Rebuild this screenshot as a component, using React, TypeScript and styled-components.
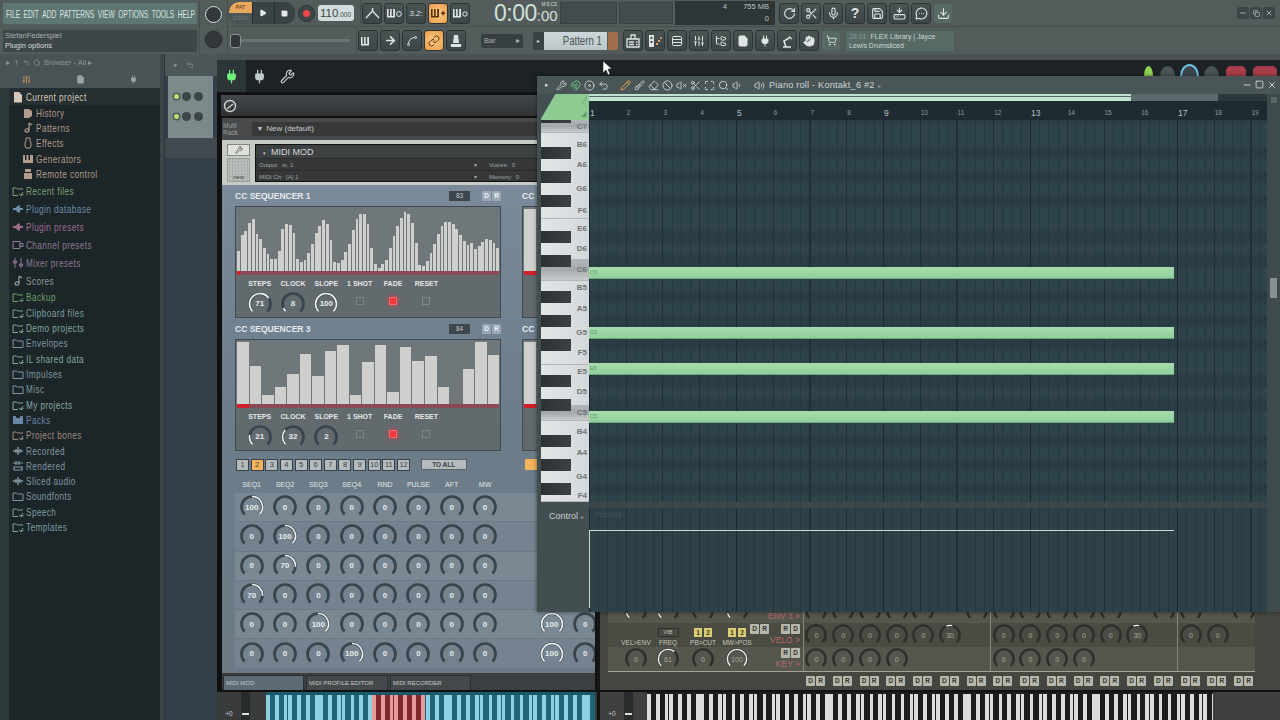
import React from 'react';
import styled, { createGlobalStyle } from 'styled-components';
import {
  Play, Square, Wrench, Magnet, Undo2, Pencil, Brush, Ban, VolumeX, Maximize, Search, Volume2, Volume1,
  Link, ArrowRight, Save, MessageCircleMore, Download, Mic, RotateCw, Plug, ShoppingCart, File, Minus, X,
  Copy, SlidersVertical, Rows3, FolderTree, Hand, ArrowUp, Spline, Scissors, HardDriveDownload, Eraser, Disc,
} from 'lucide-react';

const SANS = '"Liberation Sans", Arial, sans-serif';

const GlobalStyle = createGlobalStyle`
  html, body { margin: 0; padding: 0; background: #2b3336; overflow: hidden; }
  * { box-sizing: border-box; }
  #root { width: 1280px; height: 720px; }
`;

const octave = (semi: number, light: string, dark: string) => {
  const pattern = [0, 1, 0, 1, 0, 0, 1, 0, 1, 0, 1, 0];
  const stops = pattern
    .map((k, i) => {
      const c = k ? dark : light;
      return `${c} ${i * semi}px, ${c} ${(i + 1) * semi - (k ? 0 : 0.8)}px, ${dark} ${(i + 1) * semi - (k ? 0 : 0.8)}px, ${dark} ${(i + 1) * semi}px`;
    })
    .join(', ');
  return `repeating-linear-gradient(90deg, ${stops})`;
};

const rowShade = () => {
  // one octave of note rows read from the top: C7 ... C#6
  const dark = [0, 0, 1, 0, 1, 0, 1, 0, 0, 1, 0, 1];
  return dark
    .map((d, i) => {
      const c = d ? '#2b3d44' : '#2f434a';
      return `${c} ${i * 12}px, ${c} ${(i + 1) * 12}px`;
    })
    .join(', ');
};

const Page = styled.div`
  width: 1280px;
  height: 720px;
  display: flex;
  flex-direction: column;
  overflow: hidden;
  font-family: ${SANS};
  background: #2b3336;
  position: relative;
`;

/* ---------- top toolbar ---------- */
const TopBar = styled.div`
  height: 54px;
  display: flex;
  background: #535c5b;
  flex: none;
`;
const MenuColumn = styled.div`
  width: 200px;
  padding: 3px 2px 0 3px;
  display: flex;
  flex-direction: column;
  gap: 6px;
  border-right: 1px solid #454d4d;
`;
const MenuBar = styled.div`
  height: 21px;
  background: #5f7772;
  padding-left: 3px;
  overflow: hidden;
`;
const MenuInner = styled.div`
  width: 326px;
  height: 21px;
  display: flex;
  align-items: center;
  justify-content: space-between;
  font-size: 11.5px;
  color: #d9e4e0;
  transform: scaleX(0.58);
  transform-origin: left center;
`;
const HintPanel = styled.div`
  height: 22px;
  background: #3e4648;
  padding: 1px 2px;
  font-size: 7.5px;
  line-height: 10px;
  color: #a7afaf;
  b { display: block; font-weight: 400; color: #d4dadb; }
`;
const KnobColumn = styled.div`
  width: 28px;
  display: flex;
  flex-direction: column;
  align-items: center;
  justify-content: space-around;
  padding: 2px 0;
  border-right: 1px solid #454d4d;
`;
const RoundKnob = styled.div<{ $ring?: boolean }>`
  width: 17px;
  height: 17px;
  border-radius: 50%;
  background: #33393a;
  border: ${({ $ring }) => ($ring ? '1.5px solid #dfe6e6' : '1px solid #23282a')};
  box-shadow: 0 0 0 1px #4a5252;
`;
const Rows = styled.div`
  flex: 1;
  display: flex;
  flex-direction: column;
`;
const ToolRow = styled.div<{ $line?: boolean }>`
  height: 27px;
  display: flex;
  align-items: center;
  border-bottom: ${({ $line }) => ($line ? '1px solid #474f4f' : 'none')};
`;
const TransportPill = styled.div`
  margin-left: 1px;
  width: 66px;
  height: 22px;
  background: #2f3536;
  border-radius: 10px;
  display: flex;
  overflow: hidden;
  flex: none;
`;
const PatSong = styled.div`
  width: 23px;
  display: flex;
  flex-direction: column;
  font-size: 5.5px;
  text-align: center;
  line-height: 10px;
  span:first-child { background: #eaa85c; color: #4b3115; height: 11px; border-radius: 6px 0 0 0; }
  span:last-child { background: #4d5556; color: #6f7878; height: 11px; }
`;
const PillButton = styled.div`
  flex: 1;
  display: flex;
  align-items: center;
  justify-content: center;
  background: #3b4243;
  border-left: 1px solid #272c2d;
  color: #e5eaea;
`;
const RecordButton = styled.div`
  width: 17px;
  height: 17px;
  margin-left: 3px;
  border-radius: 50%;
  background: #3f4647;
  border: 1px solid #2c3132;
  display: flex;
  align-items: center;
  justify-content: center;
  flex: none;
  &::after { content: ''; width: 7px; height: 7px; border-radius: 50%; background: #e8474c; }
`;
const Tempo = styled.div`
  width: 36px;
  height: 16px;
  margin-left: 3px;
  margin-right: 5px;
  background: #d3dcdc;
  border-radius: 3px;
  font-size: 11.5px;
  line-height: 16px;
  color: #3d4647;
  padding-left: 2px;
  white-space: nowrap;
  flex: none;
  small { font-size: 6.5px; }
`;
const Divider = styled.div<{ $w?: number }>`
  width: 1px;
  align-self: stretch;
  background: #464e4e;
  margin: 0 ${({ $w }) => $w ?? 2}px;
  flex: none;
`;
const ToolButton = styled.div<{ $on?: boolean; $flat?: boolean; $big?: boolean }>`
  width: 20px;
  height: 21px;
  flex: none;
  border-radius: 3px;
  display: flex;
  align-items: center;
  justify-content: center;
  font-size: ${({ $big }) => ($big ? 14 : 8)}px;
  font-weight: ${({ $big }) => ($big ? 700 : 400)};
  font-style: ${({ $big }) => ($big ? 'normal' : 'italic')};
  color: ${({ $on }) => ($on ? '#5b3208' : '#dfe5e5')};
  background: ${({ $on, $flat }) =>
    $on
      ? 'radial-gradient(circle, #fbc47f 20%, #e99a45 100%)'
      : $flat
      ? '#586a66'
      : 'linear-gradient(#4a5252, #3e4546)'};
  border: 1px solid ${({ $flat }) => ($flat ? '#4d5c59' : '#2e3435')};
`;
const ToolGroup = styled.div`
  display: flex;
  gap: 2px;
  flex: none;
`;
const TimeBox = styled.div`
  width: 64px;
  margin-left: 24px;
  margin-right: 2px;
  height: 26px;
  flex: none;
  display: flex;
  align-items: baseline;
  color: #cfe0db;
  font-size: 23px;
  line-height: 26px;
  position: relative;
  letter-spacing: -0.5px;
  white-space: nowrap;
  span { font-size: 15px; letter-spacing: 0; }
  small { position: absolute; right: 1px; top: 2px; font-size: 4.5px; letter-spacing: 0; line-height: 6px; }
`;
const DarkPanel = styled.div<{ $w: number }>`
  width: ${({ $w }) => $w}px;
  height: 22px;
  background: #434b4c;
  border: 1px solid #3a4142;
  margin-right: 2px;
  flex: none;
`;
const CpuPanel = styled.div`
  width: 100px;
  height: 24px;
  margin-right: 4px;
  flex: none;
  background: #2e3537;
  display: grid;
  grid-template-columns: 1fr 42px;
  grid-template-rows: 1fr 1fr;
  font-size: 7.5px;
  color: #b9c2c2;
  line-height: 12px;
  text-align: right;
  padding-right: 3px;
  span { padding-right: 3px; }
`;
const WindowButtons = styled.div`
  margin-left: auto;
  margin-right: 5px;
  display: flex;
  gap: 1px;
`;
const WindowButton = styled.div`
  width: 12px;
  height: 12px;
  background: #3e4647;
  border-radius: 2px;
  color: #d5dbdb;
  display: flex;
  align-items: center;
  justify-content: center;
`;
const MainSlider = styled.div`
  width: 120px;
  margin: 0 5px 0 2px;
  height: 3px;
  background: #6b7474;
  position: relative;
  flex: none;
  &::before {
    content: '';
    position: absolute;
    left: 0;
    top: -5px;
    width: 9px;
    height: 12px;
    border-radius: 3px;
    background: #30363a;
    border: 1px solid #8a9292;
  }
`;
const BarSelect = styled.div`
  width: 42px;
  height: 14px;
  margin-left: 15px;
  flex: none;
  background: #383f41;
  border-radius: 2px;
  font-size: 7.5px;
  line-height: 14px;
  color: #aab3b3;
  display: flex;
  justify-content: space-between;
  padding: 0 3px;
`;
const SmallArrow = styled.div`
  width: 11px;
  height: 18px;
  margin-left: 10px;
  flex: none;
  background: #3a4244;
  border-radius: 2px 0 0 2px;
  color: #cfd6d6;
  font-size: 6px;
  line-height: 18px;
  text-align: center;
`;
const PatternName = styled.div`
  width: 63px;
  height: 18px;
  flex: none;
  background: linear-gradient(#cdd6d8, #bcc7ca);
  color: #4b5557;
  font-size: 13px;
  line-height: 18px;
  text-align: right;
  padding-right: 5px;
  span { display: inline-block; transform: scaleX(0.74); transform-origin: right center; white-space: nowrap; }
`;
const PatternSwatch = styled.div`
  width: 10px;
  height: 18px;
  flex: none;
  margin-left: 1px;
  margin-right: 5px;
  background: #a16f4c;
  border-radius: 0 2px 2px 0;
`;
const NewsPanel = styled.div`
  width: 110px;
  height: 22px;
  margin-left: 4px;
  flex: none;
  background: #586a66;
  border: 1px solid #4d5c59;
  border-radius: 2px;
  padding: 1px 3px;
  font-size: 7px;
  line-height: 9.5px;
  color: #cbd6d3;
  white-space: nowrap;
  em { font-style: normal; color: #8b9c98; margin-right: 4px; }
`;

/* ---------- browser ---------- */
const Body = styled.div`
  flex: 1;
  display: flex;
  min-height: 0;
`;
const Browser = styled.aside`
  width: 160px;
  flex: none;
  display: flex;
  flex-direction: column;
  background: #1c2528;
`;
const BrowserHead = styled.div`
  height: 34px;
  background: #495254;
  flex: none;
  display: flex;
  flex-direction: column;
`;
const BrowserPath = styled.div`
  height: 17px;
  display: flex;
  align-items: center;
  gap: 3px;
  padding-left: 6px;
  color: #8d9796;
  font-size: 7.5px;
`;
const BrowserTabs = styled.div`
  flex: 1;
  display: flex;
  justify-content: space-between;
  align-items: center;
  padding: 0 22px;
  color: #9aa3a2;
`;
const BrowserList = styled.div`
  flex: 1;
  display: flex;
  flex-direction: column;
  margin-left: 9px;
  background: #1c2528;
  box-shadow: -9px 0 0 #2e393c;
`;
const BrowserRow = styled.div<{ $h: number; $color: string; $sub?: boolean; $head?: boolean }>`
  height: ${({ $h }) => $h}px;
  display: flex;
  align-items: center;
  flex: none;
  gap: 2px;
  padding-left: ${({ $sub }) => ($sub ? 13 : 3)}px;
  font-size: 10.5px;
  letter-spacing: 0.55px;
  color: ${({ $color }) => $color};
  background: ${({ $head }) => ($head ? '#252f32' : 'transparent')};
  svg { flex: none; }
  span { white-space: nowrap; transform: scaleX(0.78); transform-origin: left center; }
`;
const Splitter = styled.div`
  width: 5px;
  flex: none;
  background: #3d4749;
  border-right: 1px solid #2c3437;
`;
const RackColumn = styled.div`
  width: 52px;
  flex: none;
  display: flex;
  flex-direction: column;
  background: #343f47;
`;
const RackHead = styled.div`
  height: 22px;
  background: #4d5759;
  display: flex;
  gap: 8px;
  align-items: center;
  padding-left: 9px;
  color: #8e9897;
  font-size: 7px;
`;
const MiniRack = styled.div`
  height: 62px;
  margin: 0 4px 0 3px;
  background: #7d8a8c;
  display: flex;
  flex-direction: column;
  padding: 16px 0 0 6px;
  gap: 11px;
`;
const MiniRow = styled.div`
  display: flex;
  align-items: center;
  gap: 3px;
`;
const Led = styled.div`
  width: 5px;
  height: 5px;
  border-radius: 50%;
  background: #b9e06f;
  box-shadow: 0 0 0 1.5px #4e5a55;
`;
const MiniKnob = styled.div`
  width: 9px;
  height: 9px;
  border-radius: 50%;
  background: #3c4649;
`;
const RackFoot = styled.div`
  height: 20px;
  background: #40494d;
`;

/* ---------- desktop ---------- */
const Desktop = styled.main`
  flex: 1;
  min-width: 0;
  position: relative;
  display: flex;
  flex-direction: column;
`;
const DeskStrip = styled.div`
  height: 6px;
  flex: none;
  background: #4a5254;
`;
const TabBar = styled.div`
  height: 32px;
  flex: none;
  display: flex;
  background: #1c2226;
`;
const TabIcons = styled.div`
  display: flex;
  align-items: center;
  gap: 13px;
  padding-left: 6px;
  color: #c3caca;
`;
const ActiveTab = styled.div`
  width: 29px;
  height: 32px;
  background: #2e3538;
  color: #6ff07a;
  display: flex;
  align-items: center;
  justify-content: center;
`;
const TabRight = styled.div`
  margin-left: auto;
  display: flex;
  gap: 7px;
  padding: 6px 3px 0 0;
`;
const TabKnob = styled.div<{ $color: string; $ring?: string; $w?: number; $r?: string }>`
  width: ${({ $w }) => $w ?? 15}px;
  height: 20px;
  border-radius: ${({ $r }) => $r ?? '50%'};
  background: ${({ $color }) => $color};
  box-shadow: ${({ $ring }) => ($ring ? `0 0 0 2px ${$ring}` : 'none')};
`;
const WorkRow = styled.div`
  flex: 1;
  display: flex;
  min-height: 0;
`;
const PluginWindow = styled.section`
  width: 380px;
  flex: none;
  display: flex;
  flex-direction: column;
  background: #111;
  padding: 3px 2px 0 5px;
  overflow: hidden;
`;
const PluginHeader = styled.div`
  height: 21px;
  flex: none;
  margin-left: -1px;
  background: linear-gradient(#45484a, #2f3133);
  display: flex;
  align-items: center;
  padding-left: 2px;
  color: #cfd3d3;
`;
const MultiRack = styled.div`
  height: 22px;
  margin-top: 2px;
  flex: none;
  background: #484a4c;
  display: flex;
  align-items: center;
  font-size: 6.5px;
  line-height: 7.5px;
  color: #97a0a0;
  padding-left: 1px;
`;
const MultiName = styled.div`
  margin-left: 14px;
  flex: 1;
  height: 14px;
  background: #36383a;
  font-size: 8px;
  line-height: 14px;
  color: #c8cccc;
  white-space: nowrap;
  padding-left: 6px;
`;
const RackStrip = styled.div`
  height: 45px;
  flex: none;
  background: #c7cbc5;
  display: flex;
  align-items: center;
  padding-left: 5px;
  gap: 5px;
`;
const RackButtons = styled.div`
  width: 23px;
  display: flex;
  flex-direction: column;
  gap: 2px;
`;
const WrenchButton = styled.div`
  height: 12px;
  background: #dfe2dc;
  border: 1px solid #82867f;
  color: #444;
  display: flex;
  align-items: center;
  justify-content: center;
`;
const NewButton = styled.div`
  height: 24px;
  background: repeating-conic-gradient(#a9adaa 0 25%, #c2c5c1 0 50%) 0 0 / 3px 3px;
  border: 1px solid #9a9e98;
  font-size: 6px;
  padding-top: 14px;
  line-height: 8px;
  text-align: center;
  color: #444;
`;
const MidiBox = styled.div`
  flex: 1;
  height: 38px;
  background: #353738;
  border: 1px solid #111;
  color: #b7bcbc;
  font-size: 6px;
  white-space: nowrap;
  overflow: hidden;
`;
const MidiName = styled.div`
  height: 13px;
  font-size: 9px;
  line-height: 14px;
  color: #d3d6d6;
  padding-left: 7px;
  background: #3e4142;
  small { font-size: 5px; margin-right: 5px; }
`;
const MidiRow = styled.div`
  height: 12px;
  line-height: 12px;
  display: flex;
  padding-left: 3px;
  border-top: 1px solid #2a2c2d;
  color: #a3a9a9;
`;
const MidiField = styled.span`
  width: 225px;
  display: flex;
  justify-content: space-between;
  padding-right: 7px;
  margin-right: 5px;
`;
const RackPanel = styled.div`
  flex: 1;
  min-height: 0;
  background: linear-gradient(#7a8a99, #6d7e8c 40%, #6b7a84);
  padding: 3px 0 0 13px;
  display: flex;
  flex-direction: column;
  overflow: hidden;
`;
const SeqGrid = styled.div`
  display: grid;
  grid-template-columns: 266px 266px;
  column-gap: 21px;
  row-gap: 3px;
  flex: none;
`;
const SeqTitle = styled.div`
  height: 18px;
  padding-bottom: 2px;
  display: flex;
  align-items: center;
  font-weight: 700;
  font-size: 8.5px;
  color: #e6eaee;
  white-space: nowrap;
`;
const SeqBadge = styled.div`
  margin-left: auto;
  width: 21px;
  height: 10px;
  background: #3e464d;
  font-weight: 400;
  font-size: 6.5px;
  line-height: 10px;
  color: #c0c6ca;
  text-align: center;
  margin-right: 11px;
`;
const TinyKey = styled.div<{ $dark?: boolean }>`
  width: 9px;
  height: 10px;
  margin-left: 1px;
  background: ${({ $dark }) => ($dark ? '#b7b8ad' : '#99a7b5')};
  color: ${({ $dark }) => ($dark ? '#33342d' : '#eef2f5')};
  border-radius: 1px;
  font-weight: 700;
  font-size: 6.5px;
  line-height: 10px;
  text-align: center;
  flex: none;
`;
const SeqPanel = styled.div`
  height: 112px;
  border: 1px solid #3f4a52;
  background: #636a6e;
  display: flex;
  flex-direction: column;
`;
const SeqBars = styled.div<{ $gap: number }>`
  height: 64px;
  flex: none;
  display: flex;
  align-items: flex-end;
  gap: ${({ $gap }) => $gap}px;
  padding: 0 1px;
  background: #6f777b;
`;
const SeqBar = styled.div`
  flex: 1;
  background: #cfd0cd;
`;
const SeqTrack = styled.div<{ $w: number }>`
  height: 4px;
  flex: none;
  margin: 0 1px;
  background: linear-gradient(90deg, #d0202c ${({ $w }) => $w}px, #8a4a55 ${({ $w }) => $w}px);
`;
const SeqControls = styled.div`
  flex: 1;
  display: grid;
  grid-template-columns: repeat(6, 33.35px);
  grid-template-rows: 14px 1fr;
  padding: 1px 0 0 7px;
  justify-items: center;
  align-items: center;
  font-size: 7px;
  font-weight: 700;
  color: #e3e6e8;
  white-space: nowrap;
`;
const Check = styled.div<{ $on?: boolean }>`
  width: 8px;
  height: 8px;
  margin-top: -5px;
  border: 1px solid ${({ $on }) => ($on ? '#f26a6f' : '#7d8589')};
  background: ${({ $on }) => ($on ? '#f0383f' : 'transparent')};
  box-shadow: ${({ $on }) => ($on ? '0 0 4px #f0383f' : 'none')};
`;
const NumberRow = styled.div`
  display: flex;
  height: 15px;
  margin-top: 6px;
  gap: 1.65px;
  flex: none;
  align-items: center;
  margin-left: 1px;
`;
const NumKey = styled.div<{ $on?: boolean }>`
  width: 13px;
  height: 12px;
  background: ${({ $on }) => ($on ? '#f4b35c' : '#b5bbbd')};
  border: 1px solid #39414a;
  font-size: 7.5px;
  line-height: 10px;
  text-align: center;
  color: #3b4349;
`;
const ToAll = styled.div`
  margin-left: 9px;
  width: 46px;
  height: 11px;
  background: #b5bbbd;
  border: 1px solid #5b646b;
  font-weight: 700;
  font-size: 6.5px;
  line-height: 9px;
  text-align: center;
  color: #3b4349;
  flex: none;
`;
const OrangeKey = styled.div`
  margin-left: 57px;
  width: 30px;
  height: 11px;
  background: #f4b35c;
  flex: none;
`;
const MatrixHead = styled.div`
  display: grid;
  grid-template-columns: repeat(8, 33.35px);
  height: 12px;
  margin-top: 6px;
  justify-items: center;
  align-items: center;
  font-size: 7px;
  color: #e3e6e8;
  flex: none;
`;
const MatrixRow = styled.div<{ $shade: boolean }>`
  display: grid;
  grid-template-columns: repeat(11, 33.35px);
  height: 29.3px;
  justify-items: center;
  align-items: center;
  flex: none;
  background: ${({ $shade }) => ($shade ? '#7a8894' : '#74838f')};
  border-bottom: 1px solid #6c7a85;
`;
const MatrixWrap = styled.div`
  margin-top: 3px;
  flex: none;
`;
const PluginTabs = styled.div`
  height: 17px;
  flex: none;
  display: flex;
  background: #3c3f41;
  align-items: flex-end;
  padding-left: 1px;
  gap: 2px;
  font-size: 6px;
  color: #c4c8c8;
`;
const PluginTab = styled.div<{ $w: number; $on?: boolean }>`
  width: ${({ $w }) => $w}px;
  height: 15px;
  background: ${({ $on }) => ($on ? '#5d6b76' : '#46494b')};
  border: 1px solid #2e3032;
  border-bottom: none;
  line-height: 15px;
  padding-left: 2px;
  white-space: nowrap;
`;

/* ---------- knob ---------- */
const KnobBox = styled.div<{ $s: number }>`
  width: ${({ $s }) => $s}px;
  height: ${({ $s }) => $s}px;
  display: grid;
  place-items: center;
  svg, span { grid-area: 1 / 1; }
  span {
    font-size: ${({ $s }) => ($s > 23 ? 8 : 7)}px;
    font-weight: 700;
    color: #e7ebee;
  }
`;
const KnobBoxDim = styled(KnobBox)`
  span { color: #a9aa9e; font-weight: 400; }
`;

const polar = (f: number) => {
  const a = ((-135 + 270 * f) * Math.PI) / 180;
  return [12 + 10.5 * Math.sin(a), 12 - 10.5 * Math.cos(a)];
};
const arcPath = (f0: number, f1: number) => {
  const [x0, y0] = polar(f0);
  const [x1, y1] = polar(f1);
  return `M${x0} ${y0}A10.5 10.5 0 ${(f1 - f0) * 270 > 180 ? 1 : 0} 1 ${x1} ${y1}`;
};

type KnobProps = { value: number | string; from?: number; to?: number; size?: number; track?: string; dim?: boolean };
const Knob = ({ value, from = 0, to = 0, size = 24, track = '#39444d', dim }: KnobProps) => {
  const Box = dim ? KnobBoxDim : KnobBox;
  return (
    <Box $s={size}>
      <svg width={size} height={size} viewBox="0 0 24 24" fill="none">
        <path d={arcPath(0, 1)} stroke={track} strokeWidth={2.7} />
        {to > from && <path d={arcPath(from, to)} stroke="#f0f2f2" strokeWidth={1.6} />}
      </svg>
      <span>{value}</span>
    </Box>
  );
};

/* ---------- sequencer ---------- */
const seqOne = [60, 108, 120, 143, 155, 110, 95, 68, 50, 35, 35, 60, 125, 140, 138, 115, 35, 28, 32, 55, 80, 115, 135, 152, 140, 93, 28, 25, 32, 58, 80, 122, 155, 172, 172, 140, 70, 20, 10, 20, 32, 70, 105, 135, 160, 177, 170, 145, 85, 18, 15, 30, 55, 80, 112, 135, 148, 148, 140, 125, 108, 90, 78, 85, 65, 75, 88, 95, 92, 85, 70];
const seqThree = [185, 115, 28, 50, 90, 150, 83, 160, 178, 28, 125, 178, 35, 172, 130, 145, 50, 0, 105, 187, 148];

type SeqProps = { title: string; badge?: string; bars: number[]; gap: number; mark: number; knobs?: [number, number, number, number, number, number] };
const Sequencer = ({ title, badge, bars, gap, mark, knobs }: SeqProps) => (
  <div>
    <SeqTitle>
      {title}
      {badge && (
        <>
          <SeqBadge>{badge}</SeqBadge>
          <TinyKey>D</TinyKey>
          <TinyKey>R</TinyKey>
        </>
      )}
    </SeqTitle>
    <SeqPanel>
      <SeqBars $gap={gap}>
        {bars.map((b, i) => (
          <SeqBar key={i} style={{ height: b / 3 }} />
        ))}
      </SeqBars>
      <SeqTrack $w={mark} />
      {knobs && (
        <SeqControls>
          <span>STEPS</span>
          <span>CLOCK</span>
          <span>SLOPE</span>
          <span>1 SHOT</span>
          <span>FADE</span>
          <span>RESET</span>
          <Knob value={knobs[0]} to={knobs[3]} />
          <Knob value={knobs[1]} to={knobs[4]} />
          <Knob value={knobs[2]} to={knobs[5]} />
          <Check />
          <Check $on />
          <Check />
        </SeqControls>
      )}
    </SeqPanel>
  </div>
);

const matrix: (number | null)[][] = [
  [100, 0, 0, 0, 0, 0, 0, 0],
  [0, 100, 0, 0, 0, 0, 0, 0],
  [0, 70, 0, 0, 0, 0, 0, 0],
  [70, 0, 0, 0, 0, 0, 0, 0],
  [0, 0, 100, 0, 0, 0, 0, 0, null, 100, 0],
  [0, 0, 0, 100, 0, 0, 0, 0, null, 100, 0],
];

/* ---------- synth window ---------- */
const SynthWindow = styled.section`
  flex: 1;
  min-width: 0;
  background: #45463f;
  display: flex;
  flex-direction: column;
  justify-content: flex-end;
  padding-left: 8px;
  border-left: 3px solid #161616;
  overflow: hidden;
`;
const SynthRow = styled.div<{ $bg: string }>`
  display: flex;
  height: 24px;
  width: 647px;
  background: ${({ $bg }) => $bg};
  flex: none;
`;
const LeftCols = styled.div`
  display: grid;
  grid-template-columns: 32px 32px 38px 30px;
  padding-left: 12px;
  width: 144px;
  flex: none;
  justify-items: center;
  align-items: center;
`;
const SynthLabelCol = styled.div`
  display: flex;
  flex-direction: column;
  align-items: center;
  justify-content: flex-end;
  align-self: stretch;
  font-size: 6.5px;
  line-height: 8px;
  color: #c6c7bb;
  white-space: nowrap;
  gap: 2px;
`;
const YellowPair = styled.div`
  display: flex;
  gap: 2px;
`;
const YellowKey = styled.div`
  width: 8px;
  height: 9px;
  background: #d8cc74;
  color: #3b3820;
  font-weight: 700;
  font-size: 6.5px;
  line-height: 9px;
  text-align: center;
`;
const VibBox = styled.div`
  width: 21px;
  height: 9px;
  background: #494a43;
  border: 1px solid #2e2f2a;
  font-size: 5.5px;
  line-height: 7px;
  text-align: center;
`;
const LabelCell = styled.div`
  width: 51px;
  flex: none;
  display: flex;
  flex-direction: column;
  align-items: flex-end;
  justify-content: flex-end;
  padding: 0 3px 2px 0;
  font-size: 8.5px;
  line-height: 10px;
  color: #b96a6a;
  white-space: nowrap;
`;
const KeyPairs = styled.div`
  display: flex;
  margin-bottom: 1px;
`;
const KeyPairGap = styled.div`
  width: 11px;
`;
const KnobCells = styled.div`
  display: grid;
  grid-template-columns: repeat(17, 26.75px);
  justify-items: center;
  align-items: center;
  flex: none;
  background:
    linear-gradient(#85867a, #85867a) 0 0 / 1px 100% no-repeat,
    linear-gradient(#85867a, #85867a) 187px 0 / 1px 100% no-repeat,
    linear-gradient(#85867a, #85867a) 374px 0 / 1px 100% no-repeat;
`;
const DrRow = styled.div`
  height: 19px;
  display: flex;
  align-items: center;
  padding-left: 197px;
  flex: none;
  border-top: 1px solid #a3a497;
  width: 647px;
`;
const DrPair = styled.div`
  width: 26.75px;
  flex: none;
  display: flex;
`;

/* ---------- bottom keyboards ---------- */
const BottomRow = styled.div`
  height: 30px;
  flex: none;
  display: flex;
  background: #111;
  padding-top: 2px;
`;
const KeyStrip = styled.div<{ $w: number; $bg: string }>`
  width: ${({ $w }) => $w}px;
  flex: none;
  display: flex;
  background: ${({ $bg }) => $bg};
  margin-right: 3px;
  overflow: hidden;
`;
const KeyOffset = styled.div`
  width: 24px;
  flex: none;
  font-size: 6.5px;
  color: #c9cccc;
  display: flex;
  align-items: flex-end;
  justify-content: center;
  padding-bottom: 3px;
`;
const OffsetSlot = styled.div`
  width: 9px;
  flex: none;
  background: #282b2b;
  display: flex;
  align-items: flex-end;
  padding: 0 1px 5px;
  &::after { content: ''; width: 100%; height: 2px; background: #ddd; }
`;
const TealKeys = styled.div<{ $from: number }>`
  margin-left: ${({ $from }) => $from}px;
  width: 329px;
  background: ${octave(4.45, '#8ed1e2', '#1f6679')};
  display: flex;
  flex: none;
  border-top: 3px solid #1a5a6d;
`;
const RedKeys = styled.div`
  margin-left: 106px;
  width: 53px;
  background: ${octave(4.45, '#e69a9a', '#7c2a2c')};
`;
const GrayKeys = styled.div`
  margin-left: 14px;
  width: 566px;
  flex: none;
  background: ${octave(4.45, '#dcdcdc', '#1c1c1c')};
  border-top: 2px solid #1c1c1c;
`;

/* ---------- piano roll ---------- */
const Roll = styled.section`
  position: absolute;
  left: 320px;
  top: 22px;
  right: 0;
  height: 536px;
  display: flex;
  flex-direction: column;
  background: #434e51;
  box-shadow: 0 0 4px rgba(0, 0, 0, 0.5);
`;
const RollHead = styled.div`
  height: 18px;
  flex: none;
  display: flex;
  align-items: center;
  background: #4a5558;
  color: #c9d1d1;
  font-size: 9.2px;
  padding-left: 3px;
`;
const RollTool = styled.div<{ $c?: string }>`
  width: 14px;
  flex: none;
  display: flex;
  align-items: center;
  justify-content: center;
  font-size: 7px;
  color: ${({ $c }) => $c ?? '#c9d1d1'};
`;
const RollSpacer = styled.div`
  width: 8px;
  flex: none;
`;
const RollTitle = styled.div`
  margin-left: 3px;
  white-space: nowrap;
  color: #cdd5d5;
  letter-spacing: 0.2px;
  span { color: #8a9597; font-size: 6px; margin-left: 3px; }
`;
const RollWinButtons = styled.div`
  margin-left: auto;
  display: flex;
  gap: 3px;
  padding-right: 3px;
  color: #e0e6e6;
`;
const RollBody = styled.div`
  flex: 1;
  display: flex;
  min-height: 0;
  padding-left: 4px;
`;
const RollLeft = styled.div`
  width: 48px;
  flex: none;
  display: flex;
  flex-direction: column;
`;
const GreenCorner = styled.div`
  height: 26px;
  flex: none;
  background: #8ecb93;
  clip-path: polygon(30% 0, 100% 0, 100% 100%, 0 100%, 0 95%);
  color: #5f9668;
  display: flex;
  flex-direction: column;
  align-items: flex-end;
  justify-content: space-around;
  padding-right: 3px;
  font-size: 7px;
`;
const PianoKeys = styled.div`
  height: 382px;
  flex: none;
  position: relative;
  overflow: hidden;
  display: flex;
  flex-direction: column;
  background: #d5d8da;
`;
const WhiteKey = styled.div<{ $h: number; $c?: boolean; $line?: boolean }>`
  height: ${({ $h }) => $h}px;
  flex: none;
  background: ${({ $c }) => ($c ? 'linear-gradient(#b4b7b9, #a5a8ab 50%, #c9cccd)' : 'linear-gradient(90deg, #e2e5e6, #d5d8da)')};
  border-bottom: ${({ $line }) => ($line ? '1px solid #b3b7b9' : 'none')};
  font-size: 8px;
  font-weight: 700;
  color: #6d7274;
  padding-right: 2px;
  display: flex;
  align-items: center;
  justify-content: flex-end;
`;
const BlackKey = styled.div`
  position: absolute;
  left: 0;
  width: 30px;
  height: 12px;
  background: linear-gradient(90deg, #2e3133, #3d4042);
`;
const ControlLabel = styled.div`
  height: 106px;
  margin-top: 6px;
  flex: none;
  padding: 1px 0 0 8px;
  font-size: 9px;
  line-height: 14px;
  color: #c6cece;
  span { color: #8a9597; font-size: 6px; margin-left: 3px; }
`;
const RollMain = styled.div`
  flex: 1;
  min-width: 0;
  display: flex;
  flex-direction: column;
`;
const ScrollStrip = styled.div`
  height: 7px;
  flex: none;
  background: #2d383b;
  display: flex;
`;
const ScrollThumb = styled.div`
  width: 542px;
  background: linear-gradient(#bfe3d0 0 30%, #566 30% 45%, #bfe3d0 45%);
`;
const ScrollRest = styled.div`
  width: 87px;
  background: #5e6a6c;
`;
const Ruler = styled.div`
  height: 19px;
  flex: none;
  display: flex;
  background: #1e2c31;
`;
const RulerCell = styled.div<{ $big: boolean }>`
  width: 36.75px;
  flex: none;
  font-size: ${({ $big }) => ($big ? 8.5 : 6.5)}px;
  color: ${({ $big }) => ($big ? '#b4bfc1' : '#8f9c9f')};
  padding: 7px 0 0 1px;
  line-height: 10px;
`;
const gridColumns = `
  repeating-linear-gradient(90deg, #1b292e 0, #1b292e 1px, transparent 1px, transparent 147px),
  repeating-linear-gradient(90deg, #1f2f35 0, #1f2f35 1px, transparent 1px, transparent 36.75px),
  repeating-linear-gradient(90deg, #26373e 0, #26373e 1px, transparent 1px, transparent 9.1875px)
`;
const NoteGrid = styled.div`
  height: 382px;
  flex: none;
  position: relative;
  overflow: hidden;
  background: ${gridColumns}, linear-gradient(180deg, ${rowShade()});
  background-size: auto, auto, auto, 100% 144px;
  background-position: 0 0, 0 0, 0 0, 0 3px;
`;
const Note = styled.div<{ $top: number }>`
  position: absolute;
  left: 0;
  top: ${({ $top }) => $top}px;
  width: 585px;
  height: 12px;
  background: linear-gradient(#a9dcb0, #8fcf9a);
  border-bottom: 1px solid #6fa67a;
  font-size: 5.5px;
  line-height: 11px;
  color: #5d9a68;
  padding-left: 1px;
`;
const GridGap = styled.div`
  height: 6px;
  flex: none;
  background: #3d4649;
`;
const VelocityLane = styled.div`
  flex: 1;
  position: relative;
  background: ${gridColumns}, #2e4048;
  font-size: 8px;
  color: #44555c;
  padding: 2px 0 0 5px;
`;
const VelocityLine = styled.div`
  position: absolute;
  left: 0;
  top: 22px;
  bottom: 4px;
  width: 585px;
  border-top: 1px solid #c4ddd0;
  border-left: 1px solid #c4ddd0;
`;
const RollScrollbar = styled.div`
  width: 13px;
  flex: none;
  background: #3f4a4d;
  display: flex;
  flex-direction: column;
  align-items: center;
  padding-top: 3px;
`;
const ScrollCap = styled.div`
  width: 6px;
  height: 6px;
  background: #5a6568;
`;
const ScrollGrip = styled.div`
  width: 7px;
  height: 20px;
  margin-top: 175px;
  background: #87918f;
`;
const CursorMark = styled.svg`
  position: absolute;
  left: 602px;
  top: 60px;
  z-index: 5;
`;

/* ---------- small drawings ---------- */
const KeysGlyph = ({ extra }: { extra?: React.ReactNode }) => (
  <svg width="16" height="12" viewBox="0 0 16 12" fill="currentColor">
    <path d="M1 2h1.6v7h1.5V2h1.6v7h1.5V2H9v8.5H1z" />
    {extra}
  </svg>
);
const Metronome = () => (
  <svg width="15" height="13" viewBox="0 0 15 13" fill="none" stroke="currentColor" strokeWidth="1.4">
    <path d="M7.5 1v4M7.5 4 1 11M7.5 4 14 11" />
  </svg>
);
const PianoLamp = () => (
  <svg width="14" height="14" viewBox="0 0 14 14" fill="currentColor">
    <path d="M5 1h4l1 8H4zM2 10h10q1 3-1 3H3q-2 0-1-3z" />
  </svg>
);
const Dial = () => (
  <svg width="14" height="14" viewBox="0 0 14 14" fill="none" stroke="currentColor" strokeWidth="1.4">
    <circle cx="7" cy="7" r="5.5" />
    <path d="M4 10 10 5" />
  </svg>
);
const RackGlyph = () => (
  <svg width="14" height="14" viewBox="0 0 14 14" fill="none" stroke="currentColor" strokeWidth="1.3">
    <path d="M1 5h12v8H1zM5 1h4v4H5zM3 8h5M3 10.5h5M10 8h1.5M10 10.5h1.5" />
  </svg>
);
const StepsGlyph = () => (
  <svg width="14" height="14" viewBox="0 0 14 14" fill="currentColor">
    <path d="M1 1h5v12H1zM2.5 3v2H4.500V3zM2.500 7v2H4.500V7z" fillRule="evenodd" />
    <path d="M8 9h2v2H8zM10 6h2v2h-2zM12 3h1.500v2H12z" fill="#e0a36a" />
  </svg>
);
const LampGlyph = () => (
  <svg width="14" height="14" viewBox="0 0 14 14" fill="none" stroke="currentColor" strokeWidth="1.6">
    <path d="M3 13h8M6 13 4 7l5-3M9 2.500l2.500 2.500" />
  </svg>
);

type IconKind = 'folder' | 'sync' | 'plug' | 'channel' | 'mixer' | 'note' | 'file' | 'pack' | 'wave' | 'render' | 'history' | 'tube' | 'keys' | 'knob';
const BrowserIcon = ({ kind }: { kind: IconKind }) => {
  const paths: Record<IconKind, React.ReactNode> = {
    folder: <path d="M1 3h3.5l1 1H11v6.5H1z" fill="none" stroke="currentColor" />,
    sync: <path d="M1 3h3.5l1 1H11M1 3v7.5h5M11 7l-2 3.5M7 9l2 1.5 2.5-1" fill="none" stroke="currentColor" />,
    plug: <path d="M1 5h2.5L6 2.500h2V5h3v2H8v2.500H6L3.500 7H1z" fill="currentColor" />,
    channel: <path d="M1 2.500h7v7H1zM8 4.500h3v3H8z" fill="none" stroke="currentColor" />,
    mixer: <path d="M3 1v10M9 1v10M1.500 4h3v2h-3zM7.500 7h3v2h-3z" fill="none" stroke="currentColor" />,
    note: <path d="M7 1v7.500M7 1l3 2M7 8.500a2 1.600 0 1 1-1-1.400z" fill="none" stroke="currentColor" strokeWidth="1.2" />,
    file: <path d="M2 1h5l3 3v7.500H2z" fill="currentColor" />,
    pack: <path d="M1 2h2.500l1 2h3l1-2H11v8H1z" fill="currentColor" />,
    wave: <path d="M1 6h10M4 4v4M6 2v8M8 4v4" fill="none" stroke="currentColor" strokeWidth="1.4" />,
    render: <path d="M1 3h10M4 1v4M7 1v4M2 7h8v3H2z" fill="none" stroke="currentColor" strokeWidth="1.2" />,
    history: <path d="M2 2h5l3 2v5l-3 2H2z" fill="currentColor" />,
    tube: <path d="M4 1h4v3l1 2v3l-1 2H4L3 9V6l1-2z" fill="none" stroke="currentColor" />,
    keys: <path d="M1 2h2v5h1.500V2h2v5H8V2h3v8H1z" fill="currentColor" />,
    knob: <path d="M3 1h6v3H3zM2 5h8v6H2z" fill="currentColor" />,
  };
  return (
    <svg width="12" height="12" viewBox="0 0 12 12">
      {paths[kind]}
    </svg>
  );
};

const browserItems: { label: string; kind: IconKind; color: string; h: number; sub?: boolean; head?: boolean }[] = [
  { label: 'Current project', kind: 'file', color: '#d6c8ba', h: 17, head: true },
  { label: 'History', kind: 'history', color: '#b39c8c', h: 15.3, sub: true },
  { label: 'Patterns', kind: 'note', color: '#b39c8c', h: 15.3, sub: true },
  { label: 'Effects', kind: 'tube', color: '#b39c8c', h: 15.3, sub: true },
  { label: 'Generators', kind: 'keys', color: '#b39c8c', h: 15.3, sub: true },
  { label: 'Remote control', kind: 'knob', color: '#b39c8c', h: 15.3, sub: true },
  { label: 'Recent files', kind: 'sync', color: '#7f9f78', h: 19 },
  { label: 'Plugin database', kind: 'plug', color: '#6f8ea8', h: 18 },
  { label: 'Plugin presets', kind: 'plug', color: '#9c6f8f', h: 18 },
  { label: 'Channel presets', kind: 'channel', color: '#8c7a90', h: 18 },
  { label: 'Mixer presets', kind: 'mixer', color: '#8c7a90', h: 18 },
  { label: 'Scores', kind: 'note', color: '#8f9a9a', h: 17 },
  { label: 'Backup', kind: 'sync', color: '#6f9f6a', h: 16 },
  { label: 'Clipboard files', kind: 'sync', color: '#7f9fa0', h: 15 },
  { label: 'Demo projects', kind: 'sync', color: '#86a8a0', h: 15.3 },
  { label: 'Envelopes', kind: 'folder', color: '#8197a0', h: 15.3 },
  { label: 'IL shared data', kind: 'sync', color: '#86a8a0', h: 15.3 },
  { label: 'Impulses', kind: 'folder', color: '#8197a0', h: 15.3 },
  { label: 'Misc', kind: 'folder', color: '#8197a0', h: 15.3 },
  { label: 'My projects', kind: 'sync', color: '#86a8a0', h: 15.3 },
  { label: 'Packs', kind: 'pack', color: '#6c86a8', h: 15.3 },
  { label: 'Project bones', kind: 'sync', color: '#a08c80', h: 15.3 },
  { label: 'Recorded', kind: 'wave', color: '#8197a0', h: 15.3 },
  { label: 'Rendered', kind: 'render', color: '#8197a0', h: 15.3 },
  { label: 'Sliced audio', kind: 'wave', color: '#8197a0', h: 15.3 },
  { label: 'Soundfonts', kind: 'folder', color: '#8197a0', h: 15.3 },
  { label: 'Speech', kind: 'sync', color: '#7f9fa0', h: 15.3 },
  { label: 'Templates', kind: 'sync', color: '#7f9fa0', h: 15.3 },
];

// heights put each label where the reference has it; the black keys hide most joins
const whiteKeys: { label: string; h: number }[] = [
  { label: 'C7', h: 13 }, { label: 'B6', h: 22 }, { label: 'A6', h: 18 }, { label: 'G6', h: 30 }, { label: 'F6', h: 16 },
  { label: 'E6', h: 18 }, { label: 'D6', h: 22 }, { label: 'C6', h: 22 },
  { label: 'B5', h: 12 }, { label: 'A5', h: 30 }, { label: 'G5', h: 18 }, { label: 'F5', h: 24 },
  { label: 'E5', h: 12 }, { label: 'D5', h: 28 }, { label: 'C5', h: 16 },
  { label: 'B4', h: 20 }, { label: 'A4', h: 22 }, { label: 'G4', h: 26 }, { label: 'F4', h: 13 },
];
const blackTops = [-9, 27, 51, 75, 111, 135, 171, 195, 219, 255, 279, 315, 339, 363];
const notes = [{ n: 'C6', top: 147 }, { n: 'G5', top: 207 }, { n: 'E5', top: 243 }, { n: 'C5', top: 291 }];

const bipolar = (v: number) => (v ? { from: 0.5, to: 0.5 + (0.5 * v) / 100 } : {});
const SYNTH_TRACK = '#2e2f2a';

const SynthKnobs = ({ vals, blank }: { vals: (number | null)[]; blank?: boolean }) => (
  <KnobCells>
    {vals.map((v, i) =>
      v === null ? (
        <span key={i} />
      ) : (
        <Knob key={i} value={blank ? '' : v} size={22} track={SYNTH_TRACK} dim {...(v ? { from: 0.42, to: 0.55 } : {})} />
      )
    )}
  </KnobCells>
);

const App = () => (
  <Page>
    <GlobalStyle />
    <TopBar>
      <MenuColumn>
        <MenuBar>
          <MenuInner>
            {['FILE', 'EDIT', 'ADD', 'PATTERNS', 'VIEW', 'OPTIONS', 'TOOLS', 'HELP'].map((m) => (
              <span key={m}>{m}</span>
            ))}
          </MenuInner>
        </MenuBar>
        <HintPanel>
          StefanFederspiel
          <b>Plugin options</b>
        </HintPanel>
      </MenuColumn>
      <KnobColumn>
        <RoundKnob $ring />
        <RoundKnob />
      </KnobColumn>
      <Rows>
        <ToolRow $line>
          <TransportPill>
            <PatSong>
              <span>PAT</span>
              <span>SONG</span>
            </PatSong>
            <PillButton><Play size={8} fill="currentColor" /></PillButton>
            <PillButton><Square size={7} fill="currentColor" /></PillButton>
          </TransportPill>
          <RecordButton />
          <Tempo>110<small>.000</small></Tempo>
          <Divider $w={1} />
          <ToolGroup>
            <ToolButton><Metronome /></ToolButton>
            <ToolButton><KeysGlyph extra={<circle cx="13" cy="7" r="2.4" fill="none" stroke="currentColor" />} /></ToolButton>
            <ToolButton>3.2:</ToolButton>
            <ToolButton $on><KeysGlyph extra={<path d="M11 5.500h4v1.400h-4zM12.300 4.200h1.400v4h-1.400z" />} /></ToolButton>
            <ToolButton><KeysGlyph extra={<circle cx="13" cy="7" r="2.2" fill="none" stroke="currentColor" />} /></ToolButton>
          </ToolGroup>
          <TimeBox>
            0:00<span>:00</span>
            <small>M:S:CS</small>
          </TimeBox>
          <DarkPanel $w={57} />
          <DarkPanel $w={54} />
          <CpuPanel>
            <span>4</span>
            <span>755 MB</span>
            <span />
            <span>0</span>
          </CpuPanel>
          <ToolGroup>
            <ToolButton><RotateCw size={13} /></ToolButton>
            <ToolButton><Scissors size={13} /></ToolButton>
            <ToolButton><Mic size={13} /></ToolButton>
            <ToolButton $big>?</ToolButton>
            <ToolButton><Save size={13} /></ToolButton>
            <ToolButton><HardDriveDownload size={13} /></ToolButton>
            <ToolButton><MessageCircleMore size={13} /></ToolButton>
            <ToolButton $flat><Download size={13} /></ToolButton>
          </ToolGroup>
          <WindowButtons>
            <WindowButton><Minus size={8} /></WindowButton>
            <WindowButton><Copy size={7} /></WindowButton>
            <WindowButton><X size={8} /></WindowButton>
          </WindowButtons>
        </ToolRow>
        <ToolRow>
          <MainSlider />
          <Divider $w={1} />
          <ToolGroup>
            <ToolButton><KeysGlyph /></ToolButton>
            <ToolButton><ArrowRight size={13} strokeWidth={3} /></ToolButton>
            <ToolButton><Spline size={12} /></ToolButton>
            <ToolButton $on><Link size={12} /></ToolButton>
            <ToolButton><PianoLamp /></ToolButton>
          </ToolGroup>
          <BarSelect>Bar<span>▸</span></BarSelect>
          <SmallArrow>▸</SmallArrow>
          <PatternName><span>Pattern 1</span></PatternName>
          <PatternSwatch />
          <ToolGroup>
            <ToolButton><RackGlyph /></ToolButton>
            <ToolButton><StepsGlyph /></ToolButton>
            <ToolButton><Rows3 size={12} /></ToolButton>
            <ToolButton><SlidersVertical size={12} /></ToolButton>
            <ToolButton><FolderTree size={12} /></ToolButton>
            <ToolButton><File size={12} fill="currentColor" /></ToolButton>
            <ToolButton><Plug size={12} fill="currentColor" /></ToolButton>
            <ToolButton><LampGlyph /></ToolButton>
            <ToolButton><Hand size={12} fill="currentColor" /></ToolButton>
            <ToolButton $flat><ShoppingCart size={11} /></ToolButton>
          </ToolGroup>
          <NewsPanel>
            <em>28.01</em>FLEX Library | Jayce
            <br />
            Lewis Drumsliced
          </NewsPanel>
        </ToolRow>
      </Rows>
    </TopBar>

    <Body>
      <Browser>
        <BrowserHead>
          <BrowserPath>
            ▸ <ArrowUp size={7} /> <Undo2 size={7} /> <Search size={8} /> Browser - All ▸
          </BrowserPath>
          <BrowserTabs>
            <SlidersVertical size={9} color="#d9a760" />
            <File size={9} fill="currentColor" />
            <Plug size={9} fill="currentColor" />
          </BrowserTabs>
        </BrowserHead>
        <BrowserList>
          {browserItems.map((b) => (
            <BrowserRow key={b.label} $h={b.h} $color={b.color} $sub={b.sub} $head={b.head}>
              <BrowserIcon kind={b.kind} />
              <span>{b.label}</span>
            </BrowserRow>
          ))}
        </BrowserList>
      </Browser>
      <Splitter />
      <RackColumn>
        <RackHead>▸ <Undo2 size={8} /></RackHead>
        <MiniRack>
          <MiniRow><Led /><MiniKnob /><MiniKnob /></MiniRow>
          <MiniRow><Led /><MiniKnob /><MiniKnob /></MiniRow>
        </MiniRack>
        <RackFoot />
      </RackColumn>

      <Desktop>
        <DeskStrip />
        <TabBar>
          <ActiveTab><Plug size={15} fill="currentColor" /></ActiveTab>
          <TabIcons>
            <Plug size={15} fill="currentColor" />
            <Wrench size={15} />
          </TabIcons>
          <TabRight>
            <TabKnob $color="#8fd14f" $w={9} />
            <TabKnob $color="#4b5356" />
            <TabKnob $color="#3c474d" $ring="#6fc3e8" />
            <TabKnob $color="#4b5356" />
            <TabKnob $color="#a83e49" $w={20} $r="5px" />
            <TabKnob $color="#a83e49" $w={24} $r="5px" />
          </TabRight>
        </TabBar>
        <WorkRow>
          <PluginWindow>
            <PluginHeader><Dial /></PluginHeader>
            <MultiRack>
              <span>Multi<br />Rack</span>
              <MultiName>▾ &nbsp;New (default)</MultiName>
            </MultiRack>
            <RackStrip>
              <RackButtons>
                <WrenchButton><Wrench size={8} /></WrenchButton>
                <NewButton>new</NewButton>
              </RackButtons>
              <MidiBox>
                <MidiName><small>▾</small>MIDI MOD</MidiName>
                <MidiRow>
                  <MidiField>Output: &nbsp;st. 1<span>▾</span></MidiField>
                  Voices: &nbsp;0
                </MidiRow>
                <MidiRow>
                  <MidiField>MIDI Ch: &nbsp;[A] 1<span>▾</span></MidiField>
                  Memory: &nbsp;0
                </MidiRow>
              </MidiBox>
            </RackStrip>
            <RackPanel>
              <SeqGrid>
                <Sequencer title="CC SEQUENCER 1" badge="83" bars={seqOne} gap={0.9} mark={3} knobs={[71, 8, 100, 0.71, 0.08, 1]} />
                <Sequencer title="CC" bars={seqThree} gap={1} mark={12} />
                <Sequencer title="CC SEQUENCER 3" badge="84" bars={seqThree} gap={1} mark={12} knobs={[21, 32, 2, 0.21, 0.32, 0]} />
                <Sequencer title="CC" bars={seqThree} gap={1} mark={12} />
              </SeqGrid>
              <NumberRow>
                {[1, 2, 3, 4, 5, 6, 7, 8, 9, 10, 11, 12].map((n) => (
                  <NumKey key={n} $on={n === 2}>{n}</NumKey>
                ))}
                <ToAll>TO ALL</ToAll>
                <OrangeKey />
              </NumberRow>
              <MatrixHead>
                {['SEQ1', 'SEQ2', 'SEQ3', 'SEQ4', 'RND', 'PULSE', 'AFT', 'MW'].map((h) => (
                  <span key={h}>{h}</span>
                ))}
              </MatrixHead>
              <MatrixWrap>
                {matrix.map((row, r) => (
                  <MatrixRow key={r} $shade={r % 2 === 0}>
                    {row.map((v, c) =>
                      v === null ? (
                        <span key={c} />
                      ) : c === 9 ? (
                        <Knob key={c} value={v} to={1} />
                      ) : (
                        <Knob key={c} value={v} {...bipolar(v)} />
                      )
                    )}
                  </MatrixRow>
                ))}
              </MatrixWrap>
            </RackPanel>
            <PluginTabs>
              <PluginTab $w={81} $on>MIDI MOD</PluginTab>
              <PluginTab $w={82}>MIDI PROFILE EDITOR</PluginTab>
              <PluginTab $w={81}>MIDI RECORDER</PluginTab>
            </PluginTabs>
          </PluginWindow>

          <SynthWindow>
            <SynthRow $bg="#55564e">
              <LeftCols>
                <Knob value="" size={22} track={SYNTH_TRACK} dim to={0.12} />
                <Knob value="" size={22} track={SYNTH_TRACK} dim to={0.12} />
                <Knob value="" size={22} track={SYNTH_TRACK} dim />
                <Knob value="" size={22} track={SYNTH_TRACK} dim to={0.12} />
              </LeftCols>
              <LabelCell>ENV 3 &gt;</LabelCell>
              <SynthKnobs blank vals={[0, 0, 0, 0, 0, null, 0, 0, 0, 0, 0, 0, null, 0, 0, null, 0]} />
            </SynthRow>
            <SynthRow $bg="#4a4b43">
              <LeftCols>
                <SynthLabelCol>VEL&gt;ENV</SynthLabelCol>
                <SynthLabelCol><VibBox>VIB</VibBox>FREQ</SynthLabelCol>
                <SynthLabelCol><YellowPair><YellowKey>1</YellowKey><YellowKey>2</YellowKey></YellowPair>PB&gt;CUT</SynthLabelCol>
                <SynthLabelCol><YellowPair><YellowKey>1</YellowKey><YellowKey>2</YellowKey></YellowPair>MW&gt;POS</SynthLabelCol>
              </LeftCols>
              <LabelCell>
                <KeyPairs>
                  <TinyKey $dark>D</TinyKey><TinyKey $dark>R</TinyKey>
                  <KeyPairGap />
                  <TinyKey $dark>R</TinyKey><TinyKey $dark>D</TinyKey>
                </KeyPairs>
                VELO &gt;
              </LabelCell>
              <SynthKnobs vals={[0, 0, 0, 0, 0, 30, null, 0, 0, 0, 0, 0, 30, null, 0, 0, null]} />
            </SynthRow>
            <SynthRow $bg="#55564e">
              <LeftCols>
                <Knob value={0} size={22} track={SYNTH_TRACK} dim />
                <Knob value={61} size={22} track={SYNTH_TRACK} dim to={0.65} />
                <Knob value={0} size={22} track={SYNTH_TRACK} dim />
                <Knob value={100} size={22} track={SYNTH_TRACK} dim to={1} />
              </LeftCols>
              <LabelCell>
                <KeyPairs>
                  <TinyKey $dark>R</TinyKey><TinyKey $dark>D</TinyKey>
                </KeyPairs>
                KEY &gt;
              </LabelCell>
              <SynthKnobs vals={[0, 0, 0, 0, null, null, null, 0, 0, 0, 0, null, null, null, null, null, null]} />
            </SynthRow>
            <DrRow>
              {Array.from({ length: 17 }, (_, i) => (
                <DrPair key={i}>
                  <TinyKey $dark>D</TinyKey>
                  <TinyKey $dark>R</TinyKey>
                </DrPair>
              ))}
            </DrRow>
          </SynthWindow>
        </WorkRow>
        <BottomRow>
          <KeyStrip $w={380} $bg="#3a3c3c">
            <KeyOffset>+0</KeyOffset>
            <OffsetSlot />
            <TealKeys $from={16}>
              <RedKeys />
            </TealKeys>
          </KeyStrip>
          <KeyStrip $w={680} $bg="#404040">
            <KeyOffset>+0</KeyOffset>
            <OffsetSlot />
            <GrayKeys />
          </KeyStrip>
        </BottomRow>

        <Roll>
          <RollHead>
            <RollTool>▸</RollTool>
            <RollTool><Wrench size={11} /></RollTool>
            <RollTool $c="#6fd08a"><Magnet size={11} /></RollTool>
            <RollTool><Disc size={11} /></RollTool>
            <RollTool><Undo2 size={11} /></RollTool>
            <RollSpacer />
            <RollTool $c="#e8a64c"><Pencil size={11} /></RollTool>
            <RollTool><Brush size={11} /></RollTool>
            <RollTool><Eraser size={11} /></RollTool>
            <RollTool><Ban size={11} /></RollTool>
            <RollTool><VolumeX size={11} /></RollTool>
            <RollTool><Scissors size={11} /></RollTool>
            <RollTool><Maximize size={11} /></RollTool>
            <RollTool><Search size={11} /></RollTool>
            <RollTool><Volume1 size={11} /></RollTool>
            <RollSpacer />
            <RollTool><Volume2 size={11} /></RollTool>
            <RollTitle>Piano roll - Kontakt_6 #2<span>▸</span></RollTitle>
            <RollWinButtons>
              <Minus size={10} />
              <Square size={9} />
              <X size={10} />
            </RollWinButtons>
          </RollHead>
          <RollBody>
            <RollLeft>
              <GreenCorner>
                <span>╱</span>
                <span>◢</span>
              </GreenCorner>
              <PianoKeys>
                {whiteKeys.map((k) => (
                  <WhiteKey key={k.label} $h={k.h} $c={k.label[0] === 'C'} $line={k.label[0] === 'C' || k.label[0] === 'F'}>
                    {k.label}
                  </WhiteKey>
                ))}
                {blackTops.map((t) => (
                  <BlackKey key={t} style={{ top: t }} />
                ))}
              </PianoKeys>
              <ControlLabel>Control<span>▸</span></ControlLabel>
            </RollLeft>
            <RollMain>
              <ScrollStrip>
                <ScrollThumb />
                <ScrollRest />
              </ScrollStrip>
              <Ruler>
                {Array.from({ length: 19 }, (_, i) => (
                  <RulerCell key={i} $big={i % 4 === 0}>{i + 1}</RulerCell>
                ))}
              </Ruler>
              <NoteGrid>
                {notes.map((n) => (
                  <Note key={n.n} $top={n.top}>{n.n}</Note>
                ))}
              </NoteGrid>
              <GridGap />
              <VelocityLane>
                Velocity
                <VelocityLine />
              </VelocityLane>
            </RollMain>
            <RollScrollbar>
              <ScrollCap />
              <ScrollGrip />
            </RollScrollbar>
          </RollBody>
        </Roll>
      </Desktop>
    </Body>
    <CursorMark width="10" height="16" viewBox="0 0 10 16">
      <path d="M1 1v12l3-3 2 5 2-1-2-5h4z" fill="#fff" stroke="#222" strokeWidth="0.6" />
    </CursorMark>
  </Page>
);

export default App;
